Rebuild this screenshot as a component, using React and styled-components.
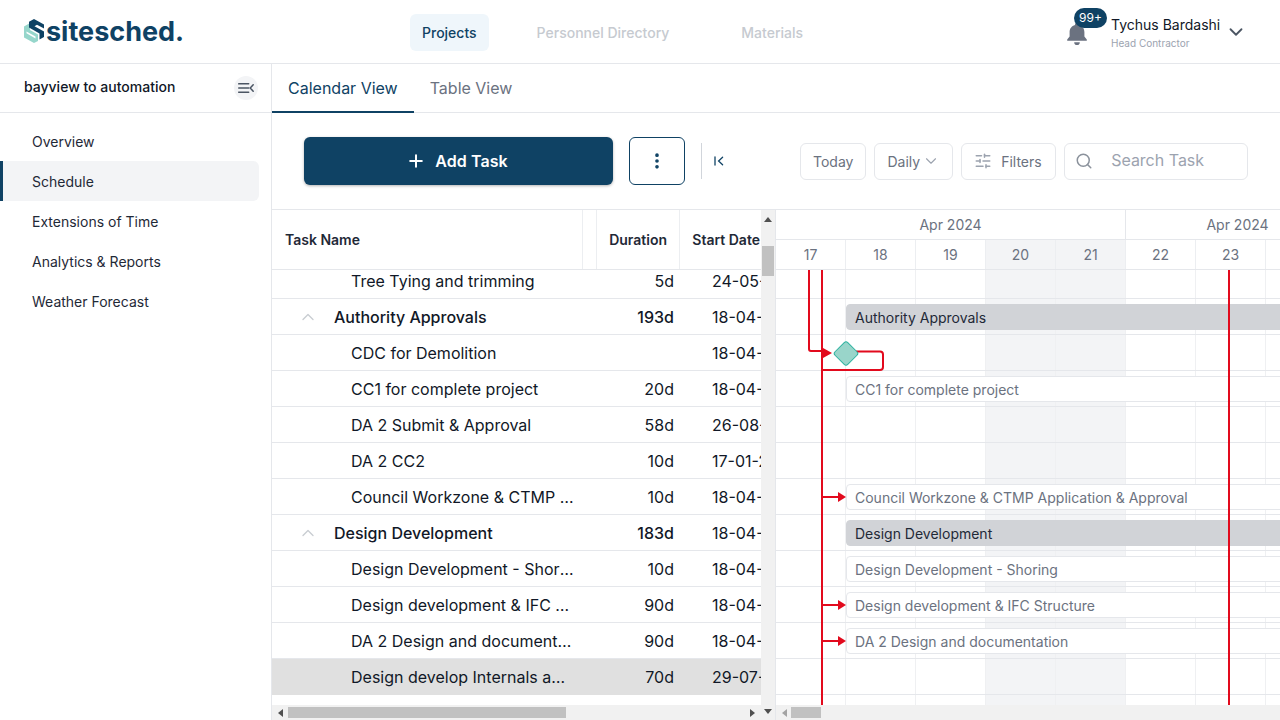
import React from "react";
import styled, { createGlobalStyle } from "styled-components";
import { ChevronDown, ChevronUp, Plus, Search, SlidersHorizontal, EllipsisVertical } from "lucide-react";

const NAVY = "#0f4264";
const RED = "#e20a1d";
const LINE = "#e5e7eb";
const DAY_WIDTH = 70;

const GlobalStyle = createGlobalStyle`
  html, body { margin: 0; padding: 0; height: 100%; overflow: hidden; background: #fff; }
  body { font-family: Inter, "Liberation Sans", sans-serif; color: #111827; }
  * { box-sizing: border-box; }
`;

const Page = styled.div`
  width: 1280px;
  height: 720px;
  display: flex;
  flex-direction: column;
  overflow: hidden;
`;

const TopBar = styled.header`
  height: 64px;
  flex: none;
  display: flex;
  align-items: center;
  border-bottom: 1px solid ${LINE};
  padding-left: 24px;
`;

const Logo = styled.div`
  width: 386px;
  display: flex;
  align-items: center;
  gap: 2px;
  color: ${NAVY};
  font-size: 27px;
  font-weight: 700;
  margin-top: -1px;
`;

const Nav = styled.nav`
  display: flex;
  align-items: center;
  gap: 36px;
  margin-top: 1px;
`;

const NavItem = styled.div`
  height: 37px;
  display: flex;
  align-items: center;
  padding: 0 12px;
  border-radius: 6px;
  font-size: 14px;
  font-weight: 500;
  color: ${(p) => (p.$active ? NAVY : "#c6cad0")};
  background: ${(p) => (p.$active ? "#eff6fb" : "transparent")};
  margin-right: ${(p) => p.$gap || 0}px;
`;

const User = styled.div`
  margin-left: auto;
  display: flex;
  align-items: center;
  margin-right: 33px;
  position: relative;
`;

const BellWrap = styled.div`
  position: relative;
  width: 45px;
  height: 24px;
  margin-top: 2px;
`;

const Badge = styled.div`
  position: absolute;
  left: 8px;
  top: -13px;
  width: 33px;
  height: 20px;
  border-radius: 10px;
  background: ${NAVY};
  color: #fff;
  font-size: 12px;
  display: flex;
  align-items: center;
  justify-content: center;
`;

const UserText = styled.div`
  width: 114px;
  display: flex;
  flex-direction: column;
  margin-top: 3px;
`;

const UserName = styled.div`
  font-size: 14px;
  line-height: 17px;
  color: #111827;
`;

const UserRole = styled.div`
  font-size: 10px;
  line-height: 14px;
  margin-top: 3px;
  color: #9ca3af;
`;

const Main = styled.div`
  flex: 1;
  min-height: 0;
  display: flex;
`;

const Sidebar = styled.aside`
  width: 272px;
  flex: none;
  border-right: 1px solid ${LINE};
`;

const ProjectRow = styled.div`
  height: 49px;
  display: flex;
  align-items: center;
  justify-content: space-between;
  padding: 0 13px 0 24px;
  border-bottom: 1px solid ${LINE};
  font-size: 14px;
  font-weight: 500;
`;

const ProjectName = styled.span`
  margin-bottom: 3px;
`;

const CollapseButton = styled.div`
  width: 24px;
  height: 24px;
  border-radius: 50%;
  background: #f3f4f6;
  display: flex;
  align-items: center;
  justify-content: center;
`;

const SideList = styled.div`
  padding-top: 8px;
`;

const SideItem = styled.div`
  width: 259px;
  height: 40px;
  display: flex;
  align-items: center;
  padding-left: ${(p) => (p.$active ? 29 : 32)}px;
  font-size: 14px;
  color: #1f2937;
  border-radius: 0 6px 6px 0;
  background: ${(p) => (p.$active ? "#f3f4f6" : "transparent")};
  border-left: ${(p) => (p.$active ? `3px solid ${NAVY}` : "none")};
`;

const Content = styled.main`
  flex: 1;
  min-width: 0;
  display: flex;
  flex-direction: column;
`;

const Tabs = styled.div`
  height: 49px;
  flex: none;
  display: flex;
  border-bottom: 1px solid ${LINE};
`;

const Tab = styled.div`
  height: 49px;
  display: flex;
  align-items: center;
  padding: 0 16px;
  font-size: 16px;
  color: ${(p) => (p.$active ? NAVY : "#6b7280")};
  border-bottom: 2px solid ${(p) => (p.$active ? NAVY : "transparent")};
`;

const Toolbar = styled.div`
  height: 97px;
  flex: none;
  display: flex;
  align-items: center;
  padding-left: 32px;
  border-bottom: 1px solid ${LINE};
`;

const AddButton = styled.div`
  width: 309px;
  height: 48px;
  padding-right: 3px;
  border-radius: 6px;
  background: ${NAVY};
  color: #fff;
  font-size: 16px;
  font-weight: 600;
  letter-spacing: 0.1px;
  display: flex;
  align-items: center;
  justify-content: center;
  gap: 9px;
  box-shadow: 0 1px 3px rgba(0, 0, 0, 0.3);
`;

const MoreButton = styled.div`
  width: 56px;
  height: 48px;
  margin-left: 16px;
  border: 1px solid ${NAVY};
  border-radius: 6px;
  display: flex;
  align-items: center;
  justify-content: center;
  color: ${NAVY};
`;

const Divider = styled.div`
  width: 1px;
  height: 36px;
  margin-left: 16px;
  background: #d1d5db;
`;

const CollapseAll = styled.div`
  width: 14px;
  margin-left: 12px;
  margin-right: 72px;
  display: flex;
`;

const ToolButton = styled.div`
  height: 37px;
  width: ${(p) => (p.$width ? `${p.$width}px` : "auto")};
  padding: 0 12px;
  margin-right: 8px;
  border: 1px solid ${LINE};
  border-radius: 6px;
  display: flex;
  align-items: center;
  font-size: 14px;
  color: #6b7280;
  gap: ${(p) => p.$gap || 4}px;
`;

const SearchBox = styled.div`
  width: 184px;
  height: 37px;
  border: 1px solid ${LINE};
  border-radius: 6px;
  display: flex;
  align-items: center;
  padding-left: 10px;
  gap: 18px;
  font-size: 16px;
  color: #9ca3af;
`;

const SearchHint = styled.span`
  margin-bottom: 2px;
`;

const Board = styled.div`
  flex: 1;
  min-height: 0;
  display: flex;
`;

const TablePane = styled.div`
  width: 489px;
  flex: none;
  display: flex;
  flex-direction: column;
`;

const TableHead = styled.div`
  height: 60px;
  flex: none;
  display: grid;
  grid-template-columns: 311px 10px 87px 81px;
  border-bottom: 1px solid ${LINE};
  font-size: 14px;
  font-weight: 600;
  color: #1f2937;
`;

const HeadCell = styled.div`
  display: flex;
  align-items: center;
  justify-content: ${(p) => (p.$right ? "flex-end" : "flex-start")};
  padding: ${(p) => (p.$last ? "0 1px 0 0" : p.$right ? "0 12px 0 0" : "0 0 0 13px")};
  border-right: ${(p) => (p.$last ? "none" : "1px solid #eceef1")};
  white-space: nowrap;
  overflow: hidden;
`;

// the list is scrolled: 7px of the first row sit above the visible area
const Rows = styled.div`
  flex: 1;
  min-height: 0;
  overflow: hidden;

  & > :first-child {
    margin-top: -7px;
  }
`;

const Row = styled.div`
  height: 36px;
  display: grid;
  grid-template-columns: 321px 81px 87px;
  align-items: center;
  font-size: 16px;
  font-weight: ${(p) => (p.$group ? 500 : 400)};
  background: ${(p) => (p.$selected ? "#e0e0e0" : "transparent")};
  border-bottom: 1px solid ${(p) => (p.$selected ? "transparent" : LINE)};
`;

const NameCell = styled.div`
  display: flex;
  align-items: center;
  padding-left: ${(p) => (p.$group ? 26 : 79)}px;
  min-width: 0;
  color: #111827;
`;

const Caret = styled.span`
  width: 36px;
  flex: none;
  display: flex;
  color: #c9cdd2;
`;

const NameText = styled.span`
  white-space: nowrap;
  overflow: hidden;
  text-overflow: ellipsis;
  padding-right: 19px;
`;

const DurationCell = styled.div`
  text-align: right;
`;

const DateCell = styled.div`
  padding-left: 38px;
  white-space: nowrap;
  overflow: hidden;
  font-weight: 400;
`;

const HTrack = styled.div`
  height: 15px;
  flex: none;
  background: #f1f1f1;
  display: flex;
  align-items: center;
  padding: 0 6px;
`;

const HThumb = styled.div`
  height: 11px;
  width: ${(p) => p.$width}px;
  margin-left: ${(p) => p.$offset}px;
  background: #c1c1c1;
`;

const ArrowLeft = styled.span`
  width: 0;
  height: 0;
  border-style: solid;
  border-width: 4px 5px 4px 0;
  border-color: transparent ${(p) => p.$color || "#505050"} transparent transparent;
`;

const ArrowRight = styled.span`
  width: 0;
  height: 0;
  margin-left: auto;
  border-style: solid;
  border-width: 4px 0 4px 5px;
  border-color: transparent transparent transparent #505050;
`;

const VTrack = styled.div`
  width: 15px;
  flex: none;
  background: #f1f1f1;
  border-right: 1px solid ${LINE};
  display: flex;
  flex-direction: column;
  align-items: center;
  padding: 7px 0 6px;
`;

const ArrowUp = styled.span`
  width: 0;
  height: 0;
  border-style: solid;
  border-width: 0 4px 5px 4px;
  border-color: transparent transparent #505050 transparent;
`;

const ArrowDown = styled.span`
  width: 0;
  height: 0;
  margin-top: auto;
  border-style: solid;
  border-width: 5px 4px 0 4px;
  border-color: #505050 transparent transparent transparent;
`;

const VThumb = styled.div`
  width: 12px;
  height: 30px;
  margin-top: 24px;
  margin-right: 1px;
  background: #c1c1c1;
`;

const GanttPane = styled.div`
  flex: 1;
  min-width: 0;
  display: flex;
  flex-direction: column;
  overflow: hidden;
`;

const MonthRow = styled.div`
  height: 30px;
  flex: none;
  display: flex;
  border-bottom: 1px solid ${LINE};
`;

const MonthCell = styled.div`
  width: ${(p) => p.$width}px;
  flex: none;
  display: flex;
  align-items: center;
  justify-content: center;
  font-size: 14px;
  color: #6b7280;
  border-right: 1px solid ${LINE};
`;

const DayRow = styled.div`
  height: 30px;
  flex: none;
  display: flex;
  border-bottom: 1px solid ${LINE};
`;

const DayCell = styled.div`
  width: ${DAY_WIDTH}px;
  flex: none;
  display: flex;
  align-items: center;
  justify-content: center;
  font-size: 14px;
  color: #6b7280;
  border-right: 1px solid #eceef1;
  background: ${(p) => (p.$weekend ? "#f3f4f6" : "transparent")};
`;

const GanttBody = styled.div`
  flex: 1;
  min-height: 0;
  position: relative;
  overflow: hidden;
`;

const DayColumns = styled.div`
  position: absolute;
  inset: 0;
  display: flex;
`;

const DayColumn = styled.div`
  width: ${DAY_WIDTH}px;
  flex: none;
  border-right: 1px solid #eff0f2;
  background: ${(p) => (p.$weekend ? "#f3f4f6" : "transparent")};
`;

const GanttRows = styled.div`
  & > :first-child {
    margin-top: -7px;
  }
`;

const GanttRow = styled.div`
  height: 36px;
  position: relative;
  border-bottom: 1px solid ${LINE};
`;

const Bar = styled.div`
  position: absolute;
  left: 70px;
  top: 5px;
  width: 520px;
  height: 26px;
  display: flex;
  align-items: center;
  padding-left: 8px;
  border-radius: 4px;
  font-size: 14px;
  white-space: nowrap;
  color: ${(p) => (p.$group ? "#1f2937" : "#6b7280")};
  background: ${(p) => (p.$group ? "#d1d3d7" : "#fff")};
  border: 1px solid ${(p) => (p.$group ? "#d1d3d7" : LINE)};
`;

const Links = styled.svg`
  position: absolute;
  left: 0;
  top: 0;
  pointer-events: none;
`;

const LogoMark = () => (
  <svg width="20" height="24" viewBox="0 0 20 24">
    <path d="M0 7.5 L6 4 L6 11 L14 15.5 L14 22 L10 24 L0 18.5 Z" fill="#96d6cb" />
    <path d="M5 2.8 L10 0 L20 5.5 L20 9.5 L13 5.8 L10.5 7.2 L20 12.4 L20 18 L15.5 20.5 L15.5 14.5 L5 8.6 Z" fill={NAVY} />
    <path d="M2.5 12.5 L11.5 17.6 L11.5 19.4 L2.5 14.3 Z" fill="#fff" />
  </svg>
);

const BellIcon = () => (
  <svg width="22" height="24" viewBox="0 0 22 24" fill="#6b7280">
    <path d="M11 1.5a2 2 0 0 1 2 2v.6c3.4.9 5.4 3.7 5.4 7.2v4.2l2.4 3v1.3H1.2v-1.3l2.4-3v-4.2c0-3.5 2-6.3 5.4-7.2v-.6a2 2 0 0 1 2-2z" />
    <path d="M8.2 21.2h5.6a2.8 2.8 0 0 1-5.6 0z" />
  </svg>
);

const SideCollapseIcon = () => (
  <svg width="16" height="10" viewBox="0 0 16 10" fill="none" stroke="#4b5563" strokeWidth="1.5" strokeLinecap="round">
    <path d="M0.7 0.8h10M0.7 5h10M0.7 9.2h10" />
    <path d="M15.2 1.8 12.2 5l3 3.2" />
  </svg>
);

const CollapseAllIcon = () => (
  <svg width="10" height="10" viewBox="0 0 10 10" fill="none" stroke={NAVY} strokeWidth="1.3" strokeLinecap="round">
    <path d="M1 1v8" />
    <path d="M8.6 1.2 4.6 5l4 3.8" />
  </svg>
);

const monthWidths = [350, 224];
const days = [17, 18, 19, 20, 21, 22, 23, 24];
const weekend = [20, 21];

const tasks = [
  { name: "Tree Tying and trimming", duration: "5d", date: "24-05-2024" },
  { name: "Authority Approvals", duration: "193d", date: "18-04-2024", group: true, bar: "Authority Approvals" },
  { name: "CDC for Demolition", duration: "", date: "18-04-2024" },
  { name: "CC1 for complete project", duration: "20d", date: "18-04-2024", bar: "CC1 for complete project" },
  { name: "DA 2 Submit & Approval", duration: "58d", date: "26-08-2024" },
  { name: "DA 2 CC2", duration: "10d", date: "17-01-2025" },
  { name: "Council Workzone & CTMP Application & Approval", duration: "10d", date: "18-04-2024", bar: "Council Workzone & CTMP Application & Approval" },
  { name: "Design Development", duration: "183d", date: "18-04-2024", group: true, bar: "Design Development" },
  { name: "Design Development - Shoring", duration: "10d", date: "18-04-2024", bar: "Design Development - Shoring" },
  { name: "Design development & IFC Structure", duration: "90d", date: "18-04-2024", bar: "Design development & IFC Structure" },
  { name: "DA 2 Design and documentation", duration: "90d", date: "18-04-2024", bar: "DA 2 Design and documentation" },
  { name: "Design develop Internals and Services", duration: "70d", date: "29-07-2024", selected: true },
  { name: "spacer", duration: "", date: "", hidden: true },
];

// y positions are relative to the top of the gantt body
const arrowRows = [227, 335, 371];

const App = () => (
  <Page>
    <GlobalStyle />
    <TopBar>
      <Logo>
        <LogoMark />
        <span>sitesched.</span>
      </Logo>
      <Nav>
        <NavItem $active>Projects</NavItem>
        <NavItem $gap={12}>Personnel Directory</NavItem>
        <NavItem>Materials</NavItem>
      </Nav>
      <User>
        <BellWrap>
          <BellIcon />
          <Badge>99+</Badge>
        </BellWrap>
        <UserText>
          <UserName>Tychus Bardashi</UserName>
          <UserRole>Head Contractor</UserRole>
        </UserText>
        <ChevronDown size={22} color="#4b5563" />
      </User>
    </TopBar>
    <Main>
      <Sidebar>
        <ProjectRow>
          <ProjectName>bayview to automation</ProjectName>
          <CollapseButton>
            <SideCollapseIcon />
          </CollapseButton>
        </ProjectRow>
        <SideList>
          <SideItem>Overview</SideItem>
          <SideItem $active>Schedule</SideItem>
          <SideItem>Extensions of Time</SideItem>
          <SideItem>Analytics &amp; Reports</SideItem>
          <SideItem>Weather Forecast</SideItem>
        </SideList>
      </Sidebar>
      <Content>
        <Tabs>
          <Tab $active>Calendar View</Tab>
          <Tab>Table View</Tab>
        </Tabs>
        <Toolbar>
          <AddButton>
            <Plus size={20} strokeWidth={2.4} />
            Add Task
          </AddButton>
          <MoreButton>
            <EllipsisVertical size={20} strokeWidth={2.4} />
          </MoreButton>
          <Divider />
          <CollapseAll>
            <CollapseAllIcon />
          </CollapseAll>
          <ToolButton>Today</ToolButton>
          <ToolButton $gap={2}>
            Daily
            <ChevronDown size={18} strokeWidth={1.5} color="#9ca3af" />
          </ToolButton>
          <ToolButton $gap={9} $width={95}>
            <SlidersHorizontal size={18} color="#9ca3af" />
            Filters
          </ToolButton>
          <SearchBox>
            <Search size={18} strokeWidth={2} color="#8b929c" />
            <SearchHint>Search Task</SearchHint>
          </SearchBox>
        </Toolbar>
        <Board>
          <TablePane>
            <TableHead>
              <HeadCell>Task Name</HeadCell>
              <HeadCell />
              <HeadCell $right>Duration</HeadCell>
              <HeadCell $last $right>Start Date</HeadCell>
            </TableHead>
            <Rows>
              {tasks.filter((t) => !t.hidden).map((task) => (
                <Row key={task.name} $group={task.group} $selected={task.selected}>
                  <NameCell $group={task.group}>
                    {task.group && (
                      <Caret>
                        <ChevronUp size={20} strokeWidth={1.6} />
                      </Caret>
                    )}
                    <NameText>{task.name}</NameText>
                  </NameCell>
                  <DurationCell>{task.duration}</DurationCell>
                  <DateCell>{task.date}</DateCell>
                </Row>
              ))}
            </Rows>
            <HTrack>
              <ArrowLeft />
              <HThumb $offset={5} $width={278} />
              <ArrowRight />
            </HTrack>
          </TablePane>
          <VTrack>
            <ArrowUp />
            <VThumb />
            <ArrowDown />
          </VTrack>
          <GanttPane>
            <MonthRow>
              {monthWidths.map((width, i) => (
                <MonthCell key={i} $width={width}>Apr 2024</MonthCell>
              ))}
            </MonthRow>
            <DayRow>
              {days.map((d) => (
                <DayCell key={d} $weekend={weekend.includes(d)}>{d}</DayCell>
              ))}
            </DayRow>
            <GanttBody>
              <DayColumns>
                {days.map((d) => (
                  <DayColumn key={d} $weekend={weekend.includes(d)} />
                ))}
              </DayColumns>
              <GanttRows>
                {tasks.map((task) => (
                  <GanttRow key={task.name}>
                    {task.bar && <Bar $group={task.group}>{task.bar}</Bar>}
                  </GanttRow>
                ))}
              </GanttRows>
              <Links width="504" height="440" fill="none">
                <path d="M46 0 V435 M453 0 V435" stroke={RED} strokeWidth="2" />
                <path d="M33 0 V79 Q33 81 35 81 H50" stroke={RED} strokeWidth="2" />
                <path d="M47 78 L56 83 L47 88 Z" fill={RED} />
                <path d="M80 81.5 H104 Q107 81.5 107 84.5 V97 Q107 100 104 100 H46" stroke={RED} strokeWidth="2" />
                <rect
                  x="61"
                  y="74.5"
                  width="18"
                  height="18"
                  rx="2.5"
                  transform="rotate(45 70 83.5)"
                  fill="#99d5ca"
                  stroke="#2fb3a0"
                />
                {arrowRows.map((y) => (
                  <g key={y}>
                    <path d={`M46 ${y} H64`} stroke={RED} strokeWidth="2" />
                    <path d={`M62 ${y - 5} L70 ${y} L62 ${y + 5} Z`} fill={RED} />
                  </g>
                ))}
              </Links>
            </GanttBody>
            <HTrack>
              <ArrowLeft $color="#a3a3a3" />
              <HThumb $offset={4} $width={30} />
            </HTrack>
          </GanttPane>
        </Board>
      </Content>
    </Main>
  </Page>
);

export default App;
